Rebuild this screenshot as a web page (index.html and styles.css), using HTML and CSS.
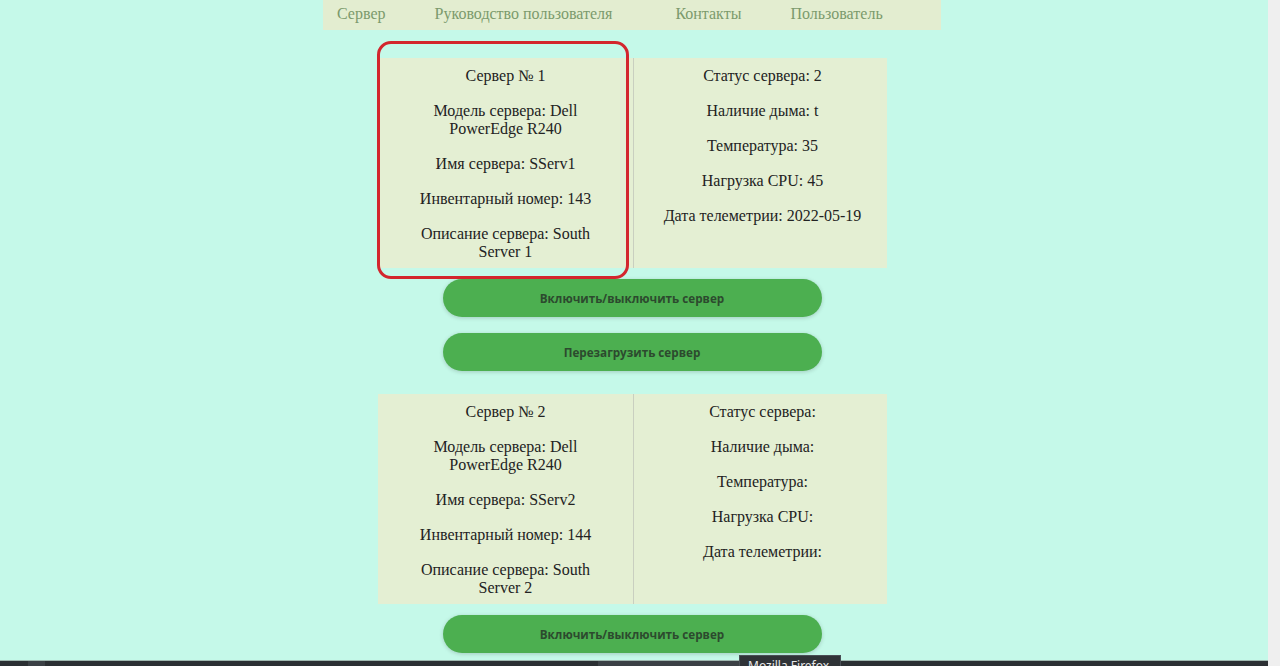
FILE: index.html
```html
<!DOCTYPE html>
<html lang="ru">
<head>
<meta charset="utf-8">
<title>Серверы</title>
<link rel="stylesheet" href="styles.css">
</head>
<body>
<div class="screen">
  <div class="viewport">
    <div class="page">
      <nav class="nav">
        <a class="nav-link" href="#">Сервер</a>
        <a class="nav-link" href="#">Руководство пользователя</a>
        <a class="nav-link nav-link--wide" href="#">Контакты</a>
        <a class="nav-link" href="#">Пользователь</a>
      </nav>

      <section class="server server--first">
        <div class="card">
          <div class="cell">
            <p>Сервер № 1</p>
            <p>Модель сервера: Dell PowerEdge R240</p>
            <p>Имя сервера: SServ1</p>
            <p>Инвентарный номер: 143</p>
            <p>Описание сервера: South Server 1</p>
          </div>
          <div class="cell cell--right">
            <p>Статус сервера: 2</p>
            <p>Наличие дыма: t</p>
            <p>Температура: 35</p>
            <p>Нагрузка CPU: 45</p>
            <p>Дата телеметрии: 2022-05-19</p>
          </div>
          <div class="highlight"></div>
        </div>
        <button class="btn">Включить/выключить сервер</button>
        <button class="btn">Перезагрузить сервер</button>
      </section>

      <section class="server">
        <div class="card">
          <div class="cell">
            <p>Сервер № 2</p>
            <p>Модель сервера: Dell PowerEdge R240</p>
            <p>Имя сервера: SServ2</p>
            <p>Инвентарный номер: 144</p>
            <p>Описание сервера: South Server 2</p>
          </div>
          <div class="cell cell--right">
            <p>Статус сервера:</p>
            <p>Наличие дыма:</p>
            <p>Температура:</p>
            <p>Нагрузка CPU:</p>
            <p>Дата телеметрии:</p>
          </div>
        </div>
        <button class="btn">Включить/выключить сервер</button>
      </section>
    </div>
  </div>
  <div class="scrollbar"></div>
</div>

<div class="taskbar">
  <span class="task task--small"></span>
  <span class="task task--active"></span>
</div>
<div class="tooltip">Mozilla Firefox</div>
</body>
</html>
```

FILE: styles.css
```css
html, body {
  margin: 0;
  padding: 0;
  height: 666px;
  overflow: hidden;
}

body {
  font-family: "Liberation Serif", "DejaVu Serif", serif;
  color: #222;
  background: #c5f9e9;
}

.screen {
  display: flex;
  height: 666px;
}

.viewport {
  flex: 1;
  background: #c5f9e9;
  padding-right: 4px;
  overflow: hidden;
}

.scrollbar {
  width: 12px;
  background: #efefef;
}

.page {
  width: 618px;
  margin: 0 auto;
  display: flex;
  flex-direction: column;
  align-items: center;
}

.nav {
  align-self: stretch;
  height: 30px;
  background: #e3edd0;
  display: flex;
  align-items: center;
  padding-left: 14px;
  padding-bottom: 2px;
  box-sizing: border-box;
  gap: 49px;
}

.nav-link {
  color: #7b9a6c;
  text-decoration: none;
  font-size: 16px;
}

.nav-link--wide {
  margin-left: 14px;
}

.server {
  display: flex;
  flex-direction: column;
  align-items: center;
  margin-top: 28px;
}

.server + .server {
  margin-top: 23px;
}

.card {
  position: relative;
  display: grid;
  grid-template-columns: 255px 254px;
  background: #e4efd3;
  margin-left: 1px;
}

.cell {
  padding: 9px 22px 7px;
  text-align: center;
  font-size: 16px;
  line-height: 18px;
}

.cell--right {
  border-left: 1px solid #c9cfc0;
  padding-left: 12px;
  padding-right: 8px;
}

.cell p {
  margin: 0 0 17px;
}

.cell p:last-child {
  margin-bottom: 0;
}

.highlight {
  position: absolute;
  left: -1px;
  top: -17px;
  width: 246px;
  height: 232px;
  border: 3px solid #d3262d;
  border-radius: 14px;
  pointer-events: none;
}

.btn {
  width: 379px;
  height: 38px;
  margin-top: 11px;
  border: none;
  border-radius: 19px;
  background: #4caf50;
  color: #2c4a2e;
  font-family: "Open Sans", "Noto Sans", sans-serif;
  font-weight: 700;
  font-size: 11.7px;
  box-shadow: 0 1px 4px rgba(0, 0, 0, 0.18);
}

.btn + .btn {
  margin-top: 16px;
}

.taskbar {
  position: fixed;
  left: 0;
  bottom: 0;
  width: 1268px;
  height: 5px;
  background: #2b2f33;
  border-top: 1px solid #9fb8b0;
  display: flex;
}

.task {
  height: 5px;
  background: #3b4045;
}

.task--small {
  margin-left: 28px;
  width: 17px;
}

.task--active {
  margin-left: 553px;
  width: 141px;
}

.tooltip {
  position: fixed;
  left: 739px;
  top: 655px;
  width: 102px;
  height: 11px;
  box-sizing: border-box;
  background: #2f3337;
  border: 1px solid #4a4f55;
  border-bottom: none;
  color: #e8e8e8;
  font-family: "Noto Sans", sans-serif;
  font-size: 12px;
  line-height: 12px;
  padding: 4px 0 0 8px;
  overflow: hidden;
}
```
